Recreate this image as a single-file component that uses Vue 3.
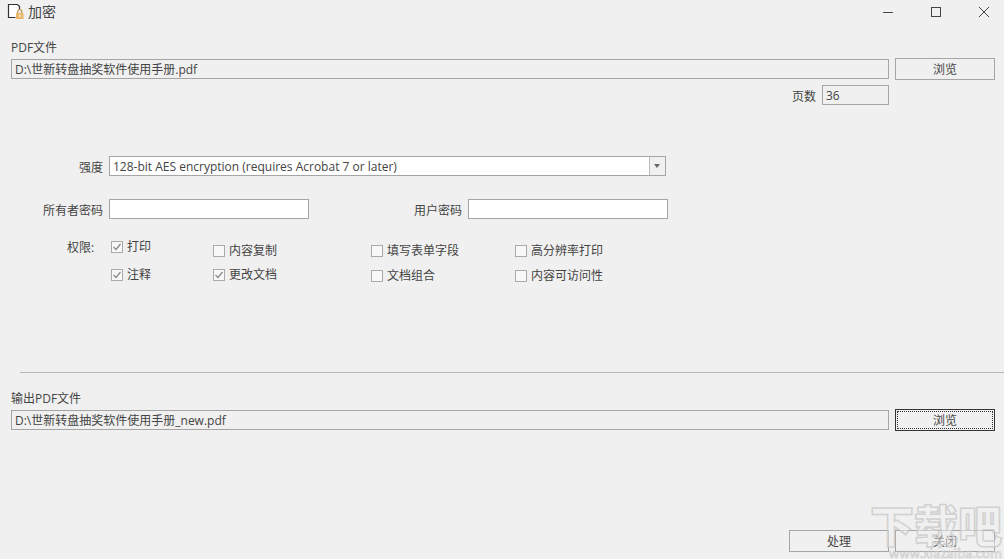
<script setup>
const cols = [
  { width: 102, top: 0, gap: 12, items: [['打印', true], ['注释', true]] },
  { width: 158, top: 4, gap: 8, items: [['内容复制', false], ['更改文档', true]] },
  { width: 144, top: 4, gap: 9, items: [['填写表单字段', false], ['文档组合', false]] },
  { width: 120, top: 4, gap: 9, items: [['高分辨率打印', false], ['内容可访问性', false]] }
]
</script>

<template>
  <main class="win">
    <header class="titlebar">
      <svg class="logo" width="18" height="20" viewBox="0 0 18 20">
        <path d="M8.5 15.5H1.5V2.5H10.5L12.5 4.5V8" fill="#fff" stroke="#333" stroke-width="1.2" />
        <rect x="9" y="11" width="7.5" height="6" fill="#e9b866" />
        <path d="M10.7 11V9.5a2 2 0 0 1 4 0V11" fill="none" stroke="#b98f4c" stroke-width="1.2" />
        <rect x="12.2" y="12.5" width="1.2" height="2.5" fill="#fff" />
      </svg>
      <span class="title">加密</span>
      <div class="controls">
        <svg width="12" height="12" viewBox="0 0 12 12"><path d="M1 6.5H11" stroke="#444" /></svg>
        <svg width="12" height="12" viewBox="0 0 12 12"><rect x="1.5" y="1.5" width="9" height="9" fill="none" stroke="#444" /></svg>
        <svg width="12" height="12" viewBox="0 0 12 12"><path d="M1 1L11 11M11 1L1 11" stroke="#444" /></svg>
      </div>
    </header>

    <section class="file-block first">
      <label class="file-label">PDF文件</label>
      <div class="file-row">
        <div class="field grow">D:\世新转盘抽奖软件使用手册.pdf</div>
        <button class="btn">浏览</button>
      </div>
    </section>

    <div class="pages">
      <span class="lowered">页数</span>
      <div class="field pagebox">36</div>
    </div>

    <div class="strength">
      <span class="lbl">强度</span>
      <div class="select">
        <span class="select-text">128-bit AES encryption (requires Acrobat 7 or later)</span>
        <span class="arrow"></span>
      </div>
    </div>

    <div class="passwords">
      <span class="lbl">所有者密码</span>
      <div class="pwd"></div>
      <span class="lbl user">用户密码</span>
      <div class="pwd"></div>
    </div>

    <div class="perms">
      <span class="perm-label">权限:</span>
      <div v-for="c in cols" :key="c.width + c.items[0][0]" class="perm-col"
        :style="{ width: c.width + 'px', paddingTop: c.top + 'px', gap: c.gap + 'px' }">
        <div v-for="it in c.items" :key="it[0]" class="check">
          <span class="box">
            <svg v-if="it[1]" width="10" height="10" viewBox="0 0 10 10"><path d="M1.5 5L4 7.5L8.5 2" fill="none" stroke="#888" stroke-width="1.2" /></svg>
          </span>
          {{ it[0] }}
        </div>
      </div>
    </div>

    <hr class="divider" />

    <section class="file-block">
      <label class="file-label">输出PDF文件</label>
      <div class="file-row">
        <div class="field grow">D:\世新转盘抽奖软件使用手册_new.pdf</div>
        <button class="btn focused"><span class="dots">浏览</span></button>
      </div>
    </section>

    <footer class="actions">
      <button class="btn">处理</button>
      <button class="btn">关闭</button>
    </footer>

    <div class="watermark">
      <div class="wm-big">下载吧</div>
      <div class="wm-small">www.xiazaiba.com</div>
    </div>
  </main>
</template>

<style>
html, body { margin: 0; background: #f0f0f0; }
</style>

<style scoped>
.win {
  position: relative;
  width: 1004px;
  height: 559px;
  overflow: hidden;
  background: #f0f0f0;
  color: #444;
  font: 12px/16px "Open Sans", "Noto Sans CJK SC", sans-serif;
  display: flex;
  flex-direction: column;
}
.titlebar {
  height: 24px;
  display: flex;
  align-items: center;
  padding-left: 7px;
}
.title { margin-left: 3px; font-size: 14px; }
.controls {
  margin-left: auto;
  display: flex;
  gap: 36px;
  padding-right: 14px;
}
.file-block { padding: 0 9px 0 11px; }
.first { margin-top: 15px; }
.file-label { display: block; height: 15px; padding-top: 1px; margin-bottom: 3px; }
.file-row { display: flex; gap: 6px; align-items: center; }
.field {
  box-sizing: border-box;
  height: 20px;
  border: 1px solid #a5a5a5;
  padding: 1px 3px;
  line-height: 17px;
}
.grow { flex: 1; }
.btn {
  box-sizing: border-box;
  width: 100px;
  height: 22px;
  border: 1px solid #a5a5a5;
  background: #f0f0f0;
  color: #444;
  font: inherit;
  padding: 2px 0 0;
}
.focused { border: 1px solid #333; padding: 1px; }
.dots {
  display: block;
  height: 18px;
  line-height: 17px;
  box-sizing: border-box;
  border: 1px dotted #333;
}
.pages {
  margin-top: 5px;
  padding-right: 115px;
  display: flex;
  justify-content: flex-end;
  align-items: center;
  gap: 6px;
}
.lowered { padding-top: 3px; }
.pagebox { width: 67px; }
.lbl { width: 98px; margin-right: 6px; padding-top: 3px; text-align: right; flex: none; }
.strength {
  margin-top: 51px;
  padding-left: 5px;
  display: flex;
  align-items: center;
  height: 20px;
}
.select {
  box-sizing: border-box;
  width: 557px;
  height: 20px;
  border: 1px solid #a5a5a5;
  background: #fff;
  display: flex;
  align-items: center;
}
.select-text { flex: 1; padding: 1px 0 0 3px; }
.arrow {
  box-sizing: border-box;
  width: 16px;
  height: 18px;
  background: #f0f0f0;
  border-left: 1px solid #bbb;
  position: relative;
}
.arrow::after {
  content: "";
  position: absolute;
  left: 4px;
  top: 7px;
  border: 3px solid transparent;
  border-top: 4px solid #666;
}
.passwords {
  margin-top: 23px;
  padding-left: 5px;
  display: flex;
  align-items: center;
  height: 20px;
}
.pwd {
  box-sizing: border-box;
  width: 200px;
  height: 20px;
  border: 1px solid #a5a5a5;
  background: #fff;
}
.user { margin-left: 55px; }
.perms {
  margin-top: 20px;
  display: flex;
  align-items: flex-start;
}
.perm-label { width: 110px; padding: 1px 0 0 67px; box-sizing: border-box; }
.perm-col { display: flex; flex-direction: column; box-sizing: border-box; }
.check { display: flex; align-items: center; gap: 4px; height: 16px; white-space: nowrap; }
.box {
  box-sizing: border-box;
  width: 12px;
  height: 12px;
  margin-left: 1px;
  border: 1px solid #aaa;
  background: #f8f8f8;
  display: flex;
  align-items: center;
  justify-content: center;
}
.divider {
  margin: 88px 0 0 20px;
  height: 1px;
  border: 0;
  background: #b9b9b9;
}
.divider + .file-block { margin-top: 17px; }
.actions {
  margin-top: auto;
  padding: 0 9px 7px 0;
  display: flex;
  justify-content: flex-end;
  gap: 6px;
}
.watermark {
  position: absolute;
  right: 2px;
  bottom: 0;
  width: 134px;
  text-align: right;
  pointer-events: none;
  font-family: "Noto Sans CJK SC", sans-serif;
}
.wm-big {
  font-size: 44px;
  line-height: 46px;
  font-weight: 900;
  white-space: nowrap;
  color: rgba(240, 240, 240, 0.55);
  -webkit-text-stroke: 1.5px rgba(195, 195, 195, 0.7);
}
.wm-small {
  font-size: 13px;
  line-height: 12px;
  color: rgba(240, 240, 240, 0.4);
  -webkit-text-stroke: 0.6px rgba(185, 185, 185, 0.7);
  white-space: nowrap;
}
</style>
